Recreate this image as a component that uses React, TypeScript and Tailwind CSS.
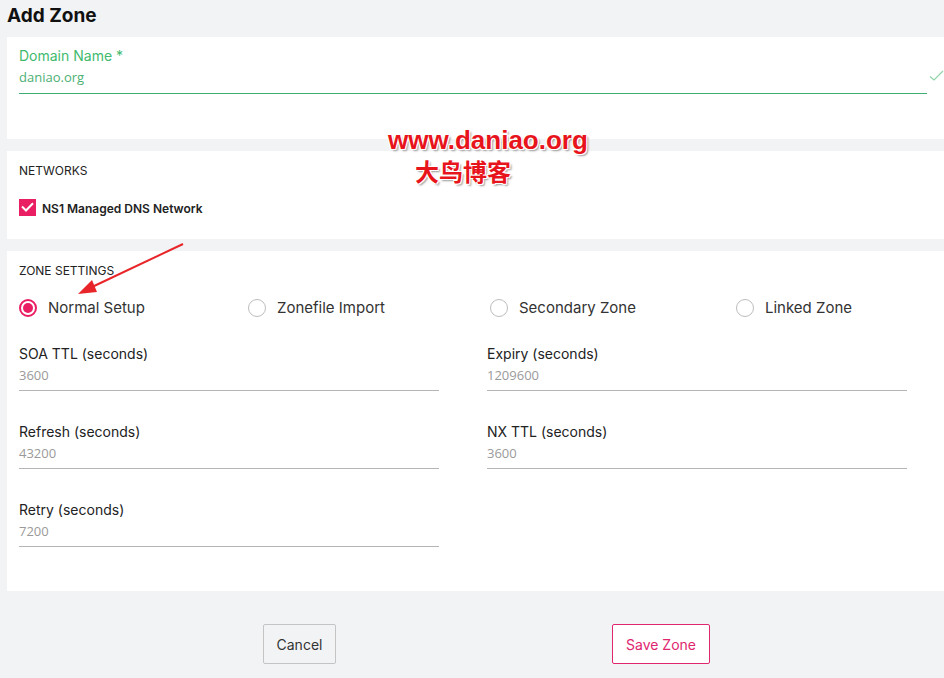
import React from 'react';

const pink = '#e0266e';

const leftFields = [
  { label: 'SOA TTL (seconds)', value: '3600' },
  { label: 'Refresh (seconds)', value: '43200' },
  { label: 'Retry (seconds)', value: '7200' },
];

const rightFields = [
  { label: 'Expiry (seconds)', value: '1209600' },
  { label: 'NX TTL (seconds)', value: '3600' },
];

const radios = ['Normal Setup', 'Zonefile Import', 'Secondary Zone', 'Linked Zone'];

const Field: React.FC<{ label: string; value: string }> = ({ label, value }) => (
  <div className="h-[78px]">
    <div className="text-[14px] leading-[18px] text-[#222] font-['Inter',sans-serif]">{label}</div>
    <div className="mt-[3px] text-[13px] leading-[18px] text-[#9a9a9a] font-['Open_Sans',sans-serif]">{value}</div>
    <div className="mt-[6px] h-px bg-[#b5b5b5]"></div>
  </div>
);

export default function App() {
  return (
    <div className="relative min-h-[678px] w-[944px] overflow-hidden bg-[#f2f3f5] font-['Inter',sans-serif]">
      <h1 className="pl-[7px] pt-[4px] h-[37px] text-[19px] font-bold text-[#111] leading-[24px]">Add Zone</h1>

      {/* Domain */}
      <div className="ml-[7px] bg-white h-[102px] pl-[12px] pr-[17px] pt-[10px]">
        <div className="text-[14px] leading-[18px] text-[#3fba6e]">Domain Name *</div>
        <div className="relative">
          <div className="mt-[3px] text-[13px] leading-[18px] text-[#4caf73] font-['Open_Sans',sans-serif]">daniao.org</div>
          <div className="mt-[7px] h-px bg-[#3fae74]"></div>
          <svg className="absolute right-[-17px] top-[2px]" width="15" height="12" viewBox="0 0 15 12">
            <path d="M1 6.5 L5 10 L14 1" fill="none" stroke="#8fd3a6" strokeWidth="1.2" />
          </svg>
        </div>
      </div>

      {/* Networks */}
      <div className="ml-[7px] mt-[12px] bg-white h-[88px] pl-[12px] pt-[13px]">
        <div className="text-[12px] leading-[14px] text-[#222]">NETWORKS</div>
        <label className="mt-[18px] flex items-center gap-[6px]">
          <span className="w-[17px] h-[17px] bg-[#e91e63] flex items-center justify-center">
            <svg width="13" height="10" viewBox="0 0 13 10">
              <path d="M1 4.5 L5 8.5 L12 1.2" fill="none" stroke="white" strokeWidth="2" />
            </svg>
          </span>
          <span className="mt-[4px] text-[12px] font-semibold text-[#222]">NS1 Managed DNS Network</span>
        </label>
      </div>

      {/* Zone settings */}
      <div className="ml-[7px] mt-[12px] bg-white h-[340px] pl-[12px] pt-[13px]">
        <div className="text-[12px] leading-[14px] text-[#222]">ZONE SETTINGS</div>
        <div className="mt-[19px] grid grid-cols-[229px_242px_246px_1fr] items-center">
          {radios.map((r, i) => (
            <div key={r} className="flex items-center gap-[11px]">
              {i === 0 ? (
                <span className="w-[18px] h-[18px] rounded-full border-2 border-[#e91e63] flex items-center justify-center">
                  <span className="w-[10px] h-[10px] rounded-full bg-[#e91e63]"></span>
                </span>
              ) : (
                <span className="w-[18px] h-[18px] rounded-full border border-[#bdbdbd]"></span>
              )}
              <span className="text-[15px] text-[#333]">{r}</span>
            </div>
          ))}
        </div>
        <div className="mt-[25px] grid grid-cols-[420px_420px] gap-x-[48px]">
          <div>
            {leftFields.map((f) => (
              <Field key={f.label} {...f} />
            ))}
          </div>
          <div>
            {rightFields.map((f) => (
              <Field key={f.label} {...f} />
            ))}
          </div>
        </div>
      </div>

      {/* Buttons */}
      <div className="mt-[33px] flex">
        <button className="ml-[263px] w-[73px] h-[40px] border border-[#c4c4c4] rounded-[2px] bg-[#f2f3f5] text-[14px] text-[#333]">
          Cancel
        </button>
        <button
          className="ml-[276px] w-[98px] h-[40px] border rounded-[2px] bg-white text-[14px]"
          style={{ borderColor: pink, color: pink }}
        >
          Save Zone
        </button>
      </div>

      {/* watermark */}
      <div className="absolute left-[388px] top-[123px] text-[#e8141c] font-['Liberation_Sans','Noto_Sans_CJK_SC',sans-serif] font-bold [text-shadow:1px_1px_0_#fff,-1px_-1px_0_#fff,1px_-1px_0_#fff,-1px_1px_0_#fff,2px_2px_2px_#999]">
        <div className="text-[26px] leading-[34px]">www.daniao.org</div>
        <div className="ml-[27px] text-[24px] leading-[28px] font-['Noto_Sans_CJK_SC',sans-serif]">大鸟博客</div>
      </div>

      {/* arrow */}
      <svg className="absolute left-0 top-0 pointer-events-none" width="944" height="678">
        <line x1="183" y1="244" x2="92" y2="287" stroke="#e8262a" strokeWidth="2" />
        <polygon points="78,294 92,280 97,292" fill="#e8262a" />
      </svg>
    </div>
  );
}
